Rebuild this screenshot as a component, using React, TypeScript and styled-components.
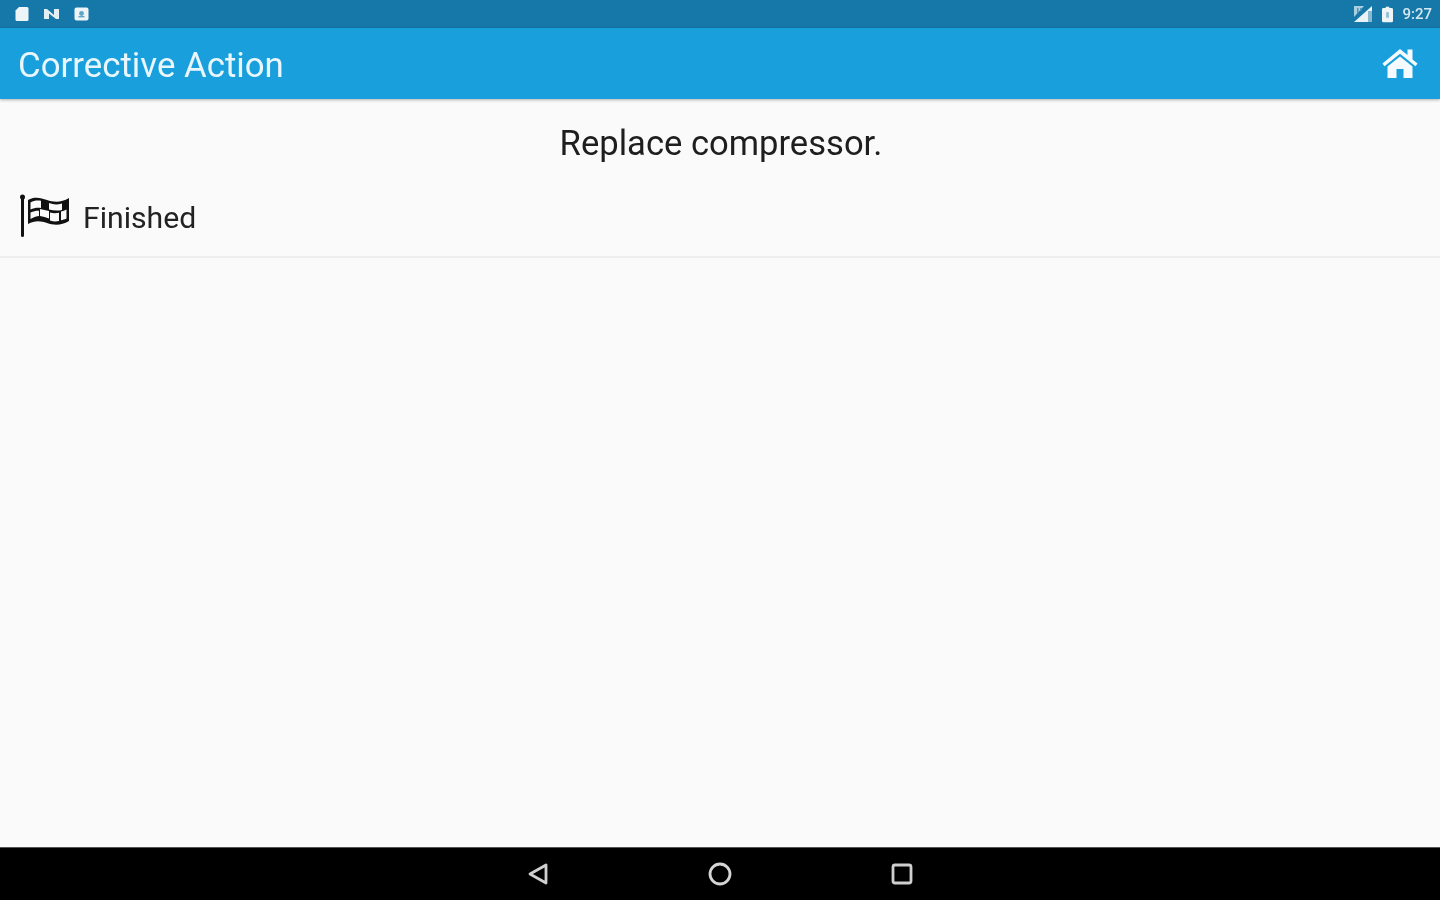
import React from 'react';
import styled, { createGlobalStyle } from 'styled-components';

const Global = createGlobalStyle`
  html, body { margin: 0; padding: 0; height: 100%; background: #fafafa; }
  #root { height: 100%; }
  * { box-sizing: border-box; }
`;

const Screen = styled.div`
  width: 1440px;
  height: 900px;
  display: flex;
  flex-direction: column;
  overflow: hidden;
  background: #fafafa;
  font-family: Roboto, "Liberation Sans", sans-serif;
  filter: blur(0.6px);
`;

const StatusBar = styled.div`
  height: 28px;
  flex: none;
  background: #1578a8;
  display: flex;
  align-items: center;
  justify-content: space-between;
  padding: 0 8px 0 14px;
  color: #e8f3f8;
`;

const StatusGroup = styled.div`
  display: flex;
  align-items: center;
  gap: ${(p: { $gap: number }) => p.$gap}px;
`;

const Clock = styled.span`
  font-size: 15px;
  font-weight: 500;
  color: #d6e8f1;
`;

const AppBar = styled.header`
  height: 71px;
  flex: none;
  background: #1a9fdd;
  display: flex;
  align-items: center;
  justify-content: space-between;
  padding: 0 22px 0 18px;
  box-shadow: 0 1px 3px rgba(0, 0, 0, 0.3);
  position: relative;
  z-index: 1;
`;

const Title = styled.h1`
  margin: 0;
  font-size: 34.8px;
  font-weight: 400;
  color: #e9f6fc;
  padding-top: 3px;
`;

const HomeSlot = styled.div`
  display: flex;
  padding-bottom: 1px;
`;

const Content = styled.main`
  flex: 1;
  display: flex;
  flex-direction: column;
`;

const Heading = styled.div`
  text-align: center;
  font-size: 34.6px;
  line-height: 40px;
  color: #1e1e1e;
  padding: 24px 0 0 2px;
  height: 85px;
`;

const Row = styled.div`
  height: 74px;
  display: flex;
  align-items: center;
  gap: 13px;
  padding: 0 0 8px 20px;
  border-bottom: 2px solid #eeeeee;
`;

const RowLabel = styled.span`
  font-size: 30.2px;
  color: #222222;
  padding-top: 3px;
`;

const NavBar = styled.nav`
  height: 53px;
  flex: none;
  background: #000;
  border-top: 1px solid #555;
  display: flex;
  align-items: center;
  justify-content: center;
  gap: 159px;
`;

const SdIcon = () => (
  <svg width="16" height="16" viewBox="0 0 16 16" fill="#eef5f8">
    <path d="M5 1h8a1.5 1.5 0 0 1 1.5 1.5v11A1.5 1.5 0 0 1 13 15H3a1.5 1.5 0 0 1-1.5-1.5V4.5z" />
  </svg>
);

const NIcon = () => (
  <svg width="18" height="14" viewBox="0 0 18 14" fill="#e4eff5">
    <path d="M1 2h3l7 6V2h5v10h-3L6 6.5V12H1z" />
  </svg>
);

const PhotoIcon = () => (
  <svg width="15" height="14" viewBox="0 0 15 14">
    <rect x="0.5" y="0.5" width="14" height="13" rx="2" fill="#eef5f8" />
    <circle cx="7.5" cy="6.500" r="2.400" fill="#5fa5c8" />
    <rect x="4.500" y="9" width="6" height="1.400" fill="#5fa5c8" />
  </svg>
);

const SignalIcon = () => (
  <svg width="20" height="17" viewBox="0 0 20 17">
    <path d="M19 0v16H1z" fill="#e8f2f7" />
    <path d="M1 0h10L1 11z" fill="#a9cfe0" />
    <path d="M4 2h1.400v5H4zM7 2h1.400v3H7z" fill="#4f93b6" />
    <path d="M15 5h4v11h-4z" fill="#88b9d1" />
  </svg>
);

const BatteryIcon = () => (
  <svg width="11" height="17" viewBox="0 0 12 17">
    <path d="M4 0h4v1.500h2.500A1.500 1.500 0 0 1 12 3v12.500a1.500 1.500 0 0 1-1.500 1.500h-9A1.500 1.500 0 0 1 0 15.500V3a1.500 1.500 0 0 1 1.500-1.500H4z" fill="#eef5f8" />
    <path d="M4.500 6h3v6h-3z" fill="#8fbdd3" />
  </svg>
);

const HomeIcon = () => (
  <svg width="36" height="31" viewBox="0 0 36 31" fill="#f4fafd">
    <path d="M18 1 25.500 7V1.500h5v10L35.500 15.500 33.500 18.200 18 5.800 2.500 18.200.5 15.500z" />
    <path d="M18 8.500 30.500 18.500V30H21.500V21H14.500V30H5.500V18.500z" />
  </svg>
);

const FlagIcon = () => (
  <svg width="50" height="44" viewBox="0 0 50 44">
    <rect x="1" y="3" width="3" height="40" rx="1.500" fill="#111" />
    <circle cx="2.500" cy="3" r="2.500" fill="#111" />
    <path d="M8 6C15 2 21 4 27 6S41 9 49 4V27C41 32 33 31 27 29S15 26 8 30Z" fill="#111" />
    <path d="M10.500 8.500C14 6.500 17 6.200 21 6.800V14C17 13.500 14 14 10.500 15.500Z" fill="#fafafa" />
    <path d="M29 9C33 10.500 37 11 42 9.500V16C37 17 33 16.500 29 15.500Z" fill="#fafafa" />
    <path d="M20 15C23 15.500 26 16.500 29 17V24.500C26 23.500 23 22.500 20 22Z" fill="#fafafa" />
    <path d="M10.500 18.500C14 17 17 16.500 19 16.800V22C17 22 14 23 10.500 25Z" fill="#fafafa" />
    <path d="M41 17.500C43 17 44.800 16.500 46.500 15.500V24.500C44.500 25.500 43 25.800 41 26.300Z" fill="#fafafa" />
    <path d="M30 18.500C33 19.500 36 19.500 39 18.800V27C36 27.800 33 27.500 30 26.500Z" fill="#fafafa" />
  </svg>
);

const BackIcon = () => (
  <svg width="22" height="24" viewBox="0 0 22 24" fill="none" stroke="#cfcfcf" strokeWidth="2.800" strokeLinejoin="round">
    <path d="M19 3V21L3 12Z" />
  </svg>
);

const CircleIcon = () => (
  <svg width="24" height="24" viewBox="0 0 24 24" fill="none" stroke="#d6d6d6" strokeWidth="2.800">
    <circle cx="12" cy="12" r="10" />
  </svg>
);

const SquareIcon = () => (
  <svg width="22" height="22" viewBox="0 0 22 22" fill="none" stroke="#cfcfcf" strokeWidth="2.800">
    <rect x="2" y="2" width="18" height="18" rx="2" />
  </svg>
);

export default function App() {
  return (
    <Screen>
      <Global />
      <StatusBar>
        <StatusGroup $gap={13}>
          <SdIcon />
          <NIcon />
          <PhotoIcon />
        </StatusGroup>
        <StatusGroup $gap={9}>
          <SignalIcon />
          <BatteryIcon />
          <Clock>9:27</Clock>
        </StatusGroup>
      </StatusBar>
      <AppBar>
        <Title>Corrective Action</Title>
        <HomeSlot>
          <HomeIcon />
        </HomeSlot>
      </AppBar>
      <Content>
        <Heading>Replace compressor.</Heading>
        <Row>
          <FlagIcon />
          <RowLabel>Finished</RowLabel>
        </Row>
      </Content>
      <NavBar>
        <BackIcon />
        <CircleIcon />
        <SquareIcon />
      </NavBar>
    </Screen>
  );
}
